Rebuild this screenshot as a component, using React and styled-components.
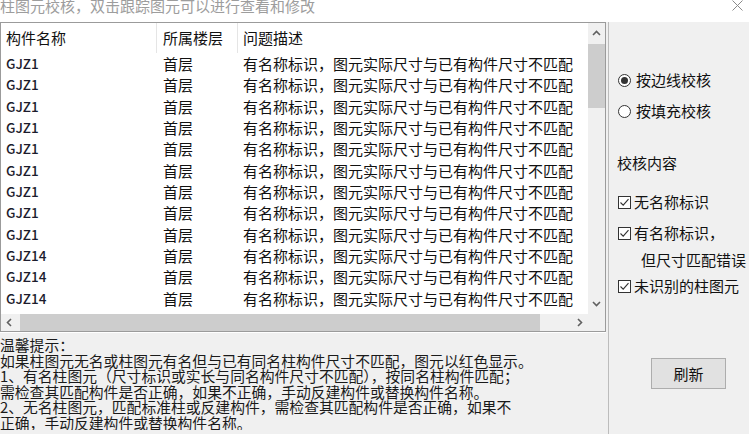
import React from "react";
import styled, { createGlobalStyle } from "styled-components";

const GlobalStyle = createGlobalStyle`
  html, body {
    margin: 0;
    padding: 0;
    width: 749px;
    height: 434px;
    overflow: hidden;
    background: #f0f0f0;
  }
  body {
    font-family: "Noto Sans CJK SC", "Noto Sans", sans-serif;
    color: #000;
  }
  * { box-sizing: border-box; }
`;

const Window = styled.div`
  width: 749px;
  height: 434px;
  display: flex;
  flex-direction: column;
  background: #f0f0f0;
  overflow: hidden;
`;

const TitleBar = styled.div`
  height: 22px;
  flex: none;
  background: #fff;
  display: flex;
  align-items: flex-start;
  justify-content: space-between;
  padding-right: 6px;
  overflow: hidden;
`;

const Title = styled.div`
  font-size: 15px;
  line-height: 15px;
  margin-top: -2px;
  color: #9d9d9d;
  white-space: nowrap;
`;

const CloseIcon = styled.svg`
  width: 11px;
  height: 11px;
  flex: none;
`;

const Body = styled.div`
  flex: 1;
  display: flex;
  min-height: 0;
`;

const LeftPane = styled.div`
  width: 609px;
  flex: none;
  display: flex;
  flex-direction: column;
  padding-right: 2px;
  border-right: 1px solid #bcbcbc;
`;

const ListBox = styled.div`
  height: 310px;
  flex: none;
  border: 1px solid #9b9b9b;
  box-shadow: 0 1px 0 #ffffff;
  display: grid;
  grid-template-columns: 1fr 17px;
  grid-template-rows: 1fr 17px;
  background: #fff;
  overflow: hidden;
`;

const Viewport = styled.div`
  overflow: hidden;
  background: #fff;
  min-width: 0;
  min-height: 0;
`;

const HeaderRow = styled.div`
  display: flex;
  height: 30px;
  white-space: nowrap;
`;

const HeaderCell = styled.div`
  flex: ${(p) => (p.$w ? `0 0 ${p.$w}px` : "1 0 auto")};
  padding-left: ${(p) => p.$pl || 6}px;
  font-size: 15px;
  line-height: 30px;
  color: #111;
  border-right: ${(p) => (p.$w ? "1px solid #e5e5e5" : "none")};
`;

const Row = styled.div`
  display: flex;
  height: 21.33px;
  align-items: center;
  white-space: nowrap;
`;

const Cell = styled.div`
  flex: ${(p) => (p.$w ? `0 0 ${p.$w}px` : "1 0 auto")};
  padding-left: ${(p) => p.$pl || 6}px;
  font-size: 15px;
  line-height: 21px;
  color: #111;
`;

const NameCell = styled(Cell)`
  font-size: 13.5px;
  color: #1c1c2c;
  font-weight: 500;
`;

const VScroll = styled.div`
  display: flex;
  flex-direction: column;
  background: #f0f0f0;
`;

const HScroll = styled.div`
  display: flex;
  background: #f0f0f0;
`;

const Corner = styled.div`
  background: #f0f0f0;
`;

const ArrowBtn = styled.div`
  flex: none;
  width: ${(p) => (p.$horizontal ? "17px" : "auto")};
  height: ${(p) => (p.$horizontal ? "auto" : "21px")};
  display: flex;
  align-items: center;
  justify-content: center;
`;

const Track = styled.div`
  flex: 1;
  display: flex;
  flex-direction: ${(p) => (p.$horizontal ? "row" : "column")};
  min-width: 0;
  min-height: 0;
`;

const Thumb = styled.div`
  background: #cdcdcd;
  flex: none;
  ${(p) =>
    p.$horizontal
      ? `width: ${p.$size}px; margin-left: ${p.$offset}px;`
      : `height: ${p.$size}px; margin-top: ${p.$offset}px;`}
`;

const Hint = styled.div`
  padding-top: 5px;
  font-size: 14.8px;
  line-height: 15.5px;
  color: #1a1a1a;
  white-space: nowrap;
  overflow: hidden;
`;

const HintLine = styled.div``;

const RightPane = styled.div`
  flex: 1;
  display: flex;
  flex-direction: column;
  padding-left: 9px;
  font-size: 15px;
  color: #111;
`;

const Option = styled.div`
  display: flex;
  align-items: center;
  height: 22px;
  margin-top: ${(p) => p.$mt || 0}px;
  margin-left: ${(p) => p.$ml || 0}px;
  gap: ${(p) => p.$gap ?? 5}px;
  white-space: nowrap;
  line-height: 22px;
`;

const RadioCircle = styled.span`
  width: 13px;
  height: 13px;
  flex: none;
  border-radius: 50%;
  border: 1px solid #333;
  background: #fff;
  display: flex;
  align-items: center;
  justify-content: center;
  &::after {
    content: "";
    width: 7px;
    height: 7px;
    border-radius: 50%;
    background: ${(p) => (p.$checked ? "#333" : "transparent")};
  }
`;

const CheckBox = styled.span`
  width: 13px;
  height: 13px;
  flex: none;
  border: 1px solid #333;
  background: #fff;
  display: flex;
  align-items: center;
  justify-content: center;
`;

const Button = styled.button`
  margin-top: ${(p) => p.$mt || 0}px;
  margin-left: 33px;
  width: 75px;
  height: 31px;
  background: #e1e1e1;
  border: 1px solid #adadad;
  font-family: "Noto Sans CJK SC", "Noto Sans", sans-serif;
  font-size: 15px;
  color: #111;
  padding: 0;
`;

const Chevron = ({ dir }) => {
  const rot = { up: 0, down: 180, left: -90, right: 90 }[dir];
  return (
    <svg width="9" height="9" viewBox="0 0 9 9" style={{ transform: `rotate(${rot}deg)` }}>
      <polyline points="1,6 4.5,2.5 8,6" fill="none" stroke="#606060" strokeWidth="1.6" />
    </svg>
  );
};

const CheckMark = () => (
  <svg width="11" height="11" viewBox="0 0 11 11">
    <polyline points="1.5,5.5 4.2,8.2 9.5,2.2" fill="none" stroke="#333" strokeWidth="1.1" />
  </svg>
);

const rows = [...Array(9).fill("GJZ1"), ...Array(3).fill("GJZ14")];

const desc = "有名称标识，图元实际尺寸与已有构件尺寸不匹配";

const hints = [
  "温馨提示：",
  "如果柱图元无名或柱图元有名但与已有同名柱构件尺寸不匹配，图元以红色显示。",
  "1、有名柱图元（尺寸标识或实长与同名构件尺寸不匹配），按同名柱构件匹配；",
  "需检查其匹配构件是否正确，如果不正确，手动反建构件或替换构件名称。",
  "2、无名柱图元，匹配标准柱或反建构件，需检查其匹配构件是否正确，如果不",
  "正确，手动反建构件或替换构件名称。",
];

export default function App() {
  return (
    <>
      <GlobalStyle />
      <Window>
        <TitleBar>
          <Title>柱图元校核，双击跟踪图元可以进行查看和修改</Title>
          <CloseIcon viewBox="0 0 11 11">
            <line x1="0.5" y1="0.5" x2="10.5" y2="10.5" stroke="#8a8a8a" strokeWidth="1" />
            <line x1="10.5" y1="0.5" x2="0.5" y2="10.5" stroke="#8a8a8a" strokeWidth="1" />
          </CloseIcon>
        </TitleBar>
        <Body>
          <LeftPane>
            <ListBox>
              <Viewport>
                <HeaderRow>
                  <HeaderCell $w={156} $pl={5}>构件名称</HeaderCell>
                  <HeaderCell $w={81} $pl={6}>所属楼层</HeaderCell>
                  <HeaderCell $pl={5}>问题描述</HeaderCell>
                </HeaderRow>
                {rows.map((name, i) => (
                  <Row key={i}>
                    <NameCell $w={156} $pl={5}>{name}</NameCell>
                    <Cell $w={81} $pl={6}>首层</Cell>
                    <Cell $pl={5}>{desc}</Cell>
                  </Row>
                ))}
              </Viewport>
              <VScroll>
                <ArrowBtn><Chevron dir="up" /></ArrowBtn>
                <Track>
                  <Thumb $size={64} $offset={0} />
                </Track>
                <ArrowBtn><Chevron dir="down" /></ArrowBtn>
              </VScroll>
              <HScroll>
                <ArrowBtn $horizontal><Chevron dir="left" /></ArrowBtn>
                <Track $horizontal>
                  <Thumb $horizontal $size={520} $offset={2} />
                </Track>
                <ArrowBtn $horizontal><Chevron dir="right" /></ArrowBtn>
              </HScroll>
              <Corner />
            </ListBox>
            <Hint>
              {hints.map((h, i) => (
                <HintLine key={i}>{h}</HintLine>
              ))}
            </Hint>
          </LeftPane>
          <RightPane>
            <Option $mt={47}>
              <RadioCircle $checked />
              按边线校核
            </Option>
            <Option $mt={9}>
              <RadioCircle />
              按填充校核
            </Option>
            <Option $mt={30} $ml={-1}>校核内容</Option>
            <Option $mt={17} $gap={3}>
              <CheckBox><CheckMark /></CheckBox>
              无名称标识
            </Option>
            <Option $mt={9} $gap={3}>
              <CheckBox><CheckMark /></CheckBox>
              有名称标识，
            </Option>
            <Option $mt={5} $ml={23}>但尺寸匹配错误</Option>
            <Option $mt={4} $gap={3}>
              <CheckBox><CheckMark /></CheckBox>
              未识别的柱图元
            </Option>
            <Button $mt={61}>刷新</Button>
          </RightPane>
        </Body>
      </Window>
    </>
  );
}
